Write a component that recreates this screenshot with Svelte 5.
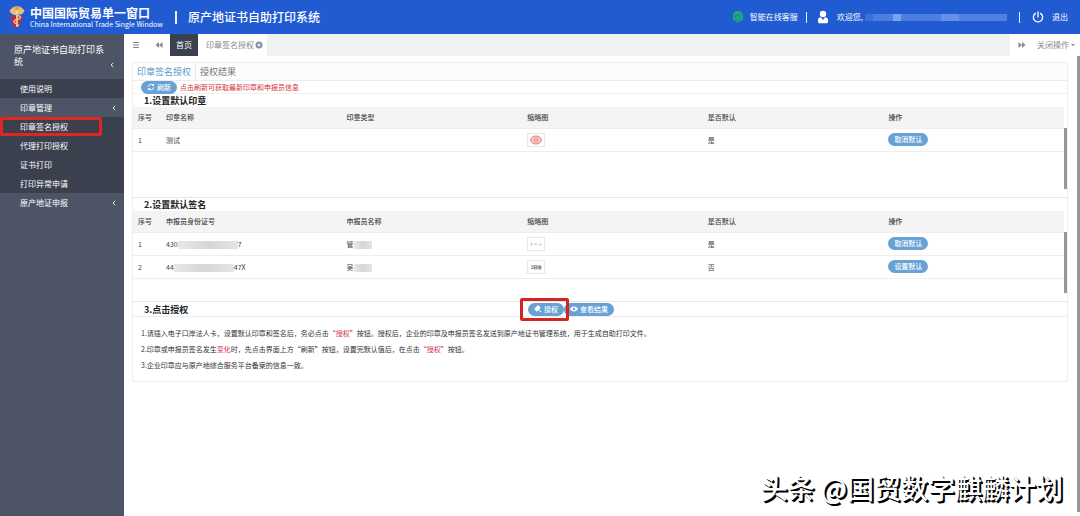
<script lang="ts">
  let activeTab = $state('auth');

  const submenu = ['印章签名授权', '代理打印授权', '证书打印', '打印异常申请'];

  const sealColumns = ['序号', '印章名称', '印章类型', '缩略图', '是否默认', '操作'];
  const signColumns = ['序号', '申报员身份证号', '申报员名称', '缩略图', '是否默认', '操作'];

  const signers = [
    { idStart: '430', idEnd: '7', name: '管', isDefault: true },
    { idStart: '44', idEnd: '47X', name: '吴', isDefault: false },
  ];
</script>

<div class="page">
  <header class="topbar">
    <a class="brand" href="#home">
      <svg class="emblem" viewBox="0 0 18 24" aria-hidden="true">
        <path d="M9 1.200c3 0 5 1.300 7.600 4.600-1.400 2.800-3.200 3.800-5 4L9 8.600 6.400 9.800c-1.800-.2-3.600-1.200-5-4C4 2.500 6 1.200 9 1.200z" fill="#e8c07c" />
        <path d="M3.500 9.500c-2 3-1.500 5.500 1 6.500-1.500 2-.5 5 3 6.500 4-.5 6-3 5-6 2-1.500 2.500-4 2-7l-3 2.500-2.500-2-3 2z" fill="#b32c4b" />
        <path d="M9 3v19" stroke="#f4dfae" stroke-width="1.600" />
        <path d="M6 8c1 2.500 6.500 2 6.500 4.500S6 14 6 16.500s5 2 4.500 4.500" fill="none" stroke="#ecc57a" stroke-width="1.500" />
        <circle cx="9" cy="3.200" r="2.200" fill="#dc9a54" />
      </svg>
      <span class="brand-text">
        <strong>中国国际贸易单一窗口</strong>
        <span>China International Trade Single Window</span>
      </span>
    </a>
    <span class="divider"></span>
    <h1>原产地证书自助打印系统</h1>
    <nav class="user-nav">
      <a class="service" href="#service">
        <svg viewBox="0 0 12 14" aria-hidden="true">
          <path d="M6 1c3 0 5 2 5 5v4l-3 1-2 2-2-2-3-1V6c0-3 2-5 5-5z" fill="#22a77c" />
          <path d="M3.500 5.500h5v4h-5zM6 3v2.500M6 9.500v2" fill="none" stroke="#1b9080" stroke-width="1" />
        </svg>
        智能在线客服
      </a>
      <span class="divider short"></span>
      <span class="welcome">
        <svg viewBox="0 0 12 14" aria-hidden="true">
          <circle cx="6" cy="4" r="3.200" fill="#fff" />
          <path d="M1 12V10c0-1.800 1.200-2.800 3-2.800L6 10l2-2.800c1.800 0 3 1 3 2.800v2c0 .8-.4 1.200-1.200 1.200H2.200C1.400 13.200 1 12.800 1 12z" fill="#fff" />
        </svg>
        欢迎您,
        <span class="redacted"></span>
      </span>
      <span class="divider short"></span>
      <a class="logout" href="#logout">
        <svg viewBox="0 0 14 14" aria-hidden="true">
          <path d="M4 2.800a5.400 5.400 0 1 0 6 0M7 1v6" fill="none" stroke="#fff" stroke-width="1.500" stroke-linecap="round" />
        </svg>
        退出
      </a>
    </nav>
  </header>

  <div class="body">
    <aside class="sidebar">
      <div class="system">
        <span>原产地证书自助打印系统</span>
        {@render chevron()}
      </div>
      <a class="item dark" href="#help">使用说明</a>
      <a class="item" href="#seal">印章管理 {@render chevron()}</a>
      {#each submenu as label, i}
        <a class="item dark" class:marked={i === 0} href="#sub{i}">{label}</a>
      {/each}
      <a class="item" href="#declare">原产地证申报 {@render chevron()}</a>
    </aside>

    <main>
      <div class="tabbar">
        <button class="icon-btn" aria-label="菜单">
          <svg viewBox="0 0 8 8"><path d="M1 1.500h6M1 4h6M1 6.500h6" stroke="#888" stroke-width="1" /></svg>
        </button>
        <button class="icon-btn" aria-label="向左">
          <svg viewBox="0 0 8 8"><path d="M4 1v6L.5 4zM7.500 1v6L4 4z" fill="#888" /></svg>
        </button>
        <button class="page-tab home">首页</button>
        <button class="page-tab">
          印章签名授权
          <svg viewBox="0 0 8 8"><circle cx="4" cy="4" r="3.500" fill="#8391a5" /><path d="M2.700 2.700l2.600 2.600M5.300 2.700L2.700 5.300" stroke="#fff" stroke-width="1" /></svg>
        </button>
        <div class="tab-actions">
          <button class="icon-btn" aria-label="向右">
            <svg viewBox="0 0 8 8"><path d="M.5 1v6L4 4zM4 1v6l3.500-3z" fill="#888" /></svg>
          </button>
          <button class="close-menu">关闭操作 <i></i></button>
        </div>
      </div>

      <div class="content">
        <div class="tabs">
          <button class:active={activeTab === 'auth'} onclick={() => (activeTab = 'auth')}>印章签名授权</button>
          <button class:active={activeTab === 'result'} onclick={() => (activeTab = 'result')}>授权结果</button>
        </div>

        <div class="refresh">
          <button class="pill">
            <svg viewBox="0 0 10 10"><path d="M1.500 4.500A3.600 3.600 0 0 1 8 3M8.500 5.500A3.600 3.600 0 0 1 2 7M8.300 1v2.300H6M1.700 9V6.700H4" fill="none" stroke="#fff" stroke-width="1.200" /></svg>
            刷新
          </button>
          <span>点击刷新可获取最新印章和申报员信息</span>
        </div>

        <section class="grid-section">
          <h2>1.设置默认印章</h2>
          <div class="table-wrap">
            <table>
              {@render head(sealColumns)}
              <tbody>
                <tr>
                  <td>1</td>
                  <td>测试</td>
                  <td></td>
                  <td>
                    <span class="thumb">
                      <svg viewBox="0 0 16 12"><ellipse cx="8" cy="6" rx="5.500" ry="4" fill="#f8cfcf" stroke="#e57f7f" stroke-width="1" /><path d="M4.500 6h7M6 4.200h4M6 7.800h4" stroke="#ea8f8f" stroke-width="1" /></svg>
                    </span>
                  </td>
                  <td>是</td>
                  <td><button class="pill">取消默认</button></td>
                </tr>
              </tbody>
            </table>
            <span class="scrollbar"></span>
          </div>
        </section>

        <section class="grid-section">
          <h2>2.设置默认签名</h2>
          <div class="table-wrap">
            <table>
              {@render head(signColumns)}
              <tbody>
                {#each signers as signer, i}
                  <tr>
                    <td>{i + 1}</td>
                    <td>{signer.idStart}<span class="mask"></span>{signer.idEnd}</td>
                    <td>{signer.name}<span class="mask name"></span></td>
                    <td>
                      <span class="thumb">
                        <svg viewBox="0 0 16 12">
                          {#if i === 0}
                            <path d="M2.500 6h2M3.500 5v2.500M6 6.500l1-1 .5 1.500M8.500 6l1.500 1M11.500 5.500l1.500 1M11.500 7h2" fill="none" stroke="#aaa" stroke-width=".7" />
                          {:else}
                            <path d="M3 5.500l2-1v3.500M3 7.500h2.500M6.500 4.500h2.500v3.500H6.500zM10 5h3v3h-3M6.500 6.300H13M11.500 4.500V8" fill="none" stroke="#777" stroke-width=".8" />
                          {/if}
                        </svg>
                      </span>
                    </td>
                    <td>{signer.isDefault ? '是' : '否'}</td>
                    <td><button class="pill">{signer.isDefault ? '取消默认' : '设置默认'}</button></td>
                  </tr>
                {/each}
              </tbody>
            </table>
            <span class="scrollbar"></span>
          </div>
        </section>

        <section class="authorize">
          <div class="authorize-head">
            <h2>3.点击授权</h2>
            <div class="authorize-actions">
              <span class="highlight">
                <button class="pill">
                  <svg viewBox="0 0 10 10"><path d="M1 5l4-4 2.500 2.500-4 4zM5.500 5.500L9 9" fill="#fff" stroke="#fff" stroke-width="1.300" /></svg>
                  授权
                </button>
              </span>
              <button class="pill">
                <svg viewBox="0 0 10 10"><path d="M0 5c2.500-4 7.500-4 10 0-2.500 4-7.500 4-10 0z" fill="#fff" /><circle cx="5" cy="5" r="1.500" fill="#68a1d4" /></svg>
                查看结果
              </button>
            </div>
          </div>
          <div class="notes">
            <p>1.请插入电子口岸法人卡，设置默认印章和签名后，务必点击<em>“授权”</em>按钮。授权后，企业的印章及申报员签名发送到原产地证书管理系统，用于生成自助打印文件。</p>
            <p>2.印章或申报员签名发生<em>变化</em>时，先点击界面上方“刷新”按钮，设置完默认值后，在点击<em>“授权”</em>按钮。</p>
            <p>3.企业印章应与原产地综合服务平台备案的信息一致。</p>
          </div>
        </section>
      </div>
    </main>
    <span class="page-scroll"></span>
  </div>

  <div class="watermark">头条 @国贸数字麒麟计划</div>
</div>

{#snippet chevron()}
  <svg class="chevron" viewBox="0 0 4 6" aria-hidden="true"><path d="M3.300.8L1 3l2.300 2.200" fill="none" stroke="#e3e5ea" stroke-width="1" /></svg>
{/snippet}

{#snippet head(columns: string[])}
  <thead>
    <tr>
      {#each columns as column}
        <th>{column}</th>
      {/each}
    </tr>
  </thead>
{/snippet}

<style>
  :global(body) {
    margin: 0;
    background: #fff;
  }

  .page {
    position: relative;
    display: flex;
    flex-direction: column;
    min-height: 100vh;
    font-family: 'Noto Sans CJK SC', 'Noto Sans', sans-serif;
    font-size: 7px;
    line-height: 12px;
    color: #444;
  }

  button {
    margin: 0;
    padding: 0;
    border: 0;
    background: none;
    font: inherit;
    color: inherit;
    cursor: pointer;
  }

  a {
    color: inherit;
    text-decoration: none;
  }

  h1,
  h2,
  p {
    margin: 0;
  }

  svg {
    flex: none;
  }

  /* top bar */
  .topbar {
    display: flex;
    align-items: center;
    height: 34px;
    padding: 0 12px 0 8px;
    background: #205bd2;
    color: #fff;
  }

  .brand {
    display: flex;
    align-items: center;
    gap: 4px;
  }

  .emblem {
    width: 18px;
    height: 24px;
  }

  .brand-text {
    display: flex;
    flex-direction: column;
    line-height: 9px;
    white-space: nowrap;
  }

  .brand-text strong {
    font-size: 12px;
    line-height: 14px;
    font-weight: 700;
  }

  .divider {
    width: 2px;
    height: 13px;
    margin: 0 11px 0 12px;
    background: #e6edfb;
  }

  .divider.short {
    width: 1px;
    height: 11px;
    margin: 0;
  }

  h1 {
    font-size: 12px;
    line-height: 18px;
    font-weight: 500;
  }

  .user-nav {
    display: flex;
    align-items: center;
    gap: 8px;
    margin-left: auto;
    font-size: 8px;
  }

  .user-nav a,
  .welcome {
    display: flex;
    align-items: center;
    gap: 6px;
  }

  .user-nav svg {
    width: 12px;
    height: 14px;
  }

  .welcome {
    gap: 8px;
    margin: 0 4px 0 2px;
  }

  .user-nav .logout {
    gap: 8px;
    margin-left: 4px;
  }

  .redacted {
    width: 142px;
    height: 7px;
    margin-left: -6px;
    background: linear-gradient(90deg, #3a6edb 0 8px, #4c7ee1 8px 28px, #7ea3ee 28px 36px, #4c7ee1 36px 76px, #6690e8 76px 94px, #5080e2 94px);
  }

  /* sidebar */
  .body {
    display: flex;
    flex: 1;
  }

  .sidebar {
    flex: none;
    width: 124px;
    background: #4c5466;
    color: #fff;
    font-size: 8px;
  }

  .system {
    display: flex;
    align-items: flex-end;
    justify-content: space-between;
    box-sizing: border-box;
    height: 45px;
    padding: 0 10px 11px 14px;
    font-size: 9px;
  }

  .item {
    display: flex;
    align-items: center;
    justify-content: space-between;
    height: 19px;
    padding: 0 8px 0 20px;
  }

  .dark {
    background: #3a404d;
  }

  .marked {
    margin-right: 22px;
    padding: 0 0 0 17px;
    height: 13px;
    border: 3px solid #e0261f;
    border-radius: 2px;
    box-shadow: 22px 0 #3a404d;
  }

  .chevron {
    width: 4px;
    height: 6px;
  }

  /* page tabs */
  main {
    flex: 1;
    min-width: 0;
  }

  .tabbar {
    display: flex;
    height: 22px;
    background: #f0f2f2;
    font-size: 8px;
    color: #888;
  }

  .icon-btn {
    display: flex;
    align-items: center;
    justify-content: center;
    width: 23px;
    background: #fff;
  }

  .tabbar svg {
    width: 8px;
    height: 8px;
  }

  .page-tab {
    display: flex;
    align-items: center;
    gap: 1px;
    padding: 0 4px 0 8px;
    background: #fff;
    white-space: nowrap;
  }

  .page-tab.home {
    padding: 0 6px;
    background: #3a404d;
    color: #fff;
  }

  .tab-actions {
    display: flex;
    margin-left: auto;
    background: #fff;
  }

  .close-menu {
    display: flex;
    align-items: center;
    gap: 2px;
    padding: 0 2px 0 4px;
    white-space: nowrap;
  }

  .close-menu i {
    border: 2px solid transparent;
    border-top-color: #888;
    border-bottom: 0;
  }

  /* content */
  .content {
    margin: 6px 9px 0 8px;
    border: 1px solid #eef0f0;
    border-bottom: 0;
  }

  .tabs {
    display: flex;
    height: 17px;
    border-bottom: 1px solid #eaeded;
    background: #fcfcfc;
    font-size: 9px;
    color: #777;
  }

  .tabs button {
    padding: 0 4px;
  }

  .tabs .active {
    border-right: 1px solid #e6e9e9;
    background: #fff;
    color: #5b9bc9;
  }

  .refresh {
    display: flex;
    align-items: center;
    gap: 3px;
    height: 12px;
    padding-left: 8px;
    border-bottom: 1px solid #eef0f0;
    color: #d6323a;
  }

  .pill {
    display: inline-flex;
    align-items: center;
    justify-content: center;
    gap: 2px;
    height: 13px;
    padding: 0 6px;
    border-radius: 7px;
    background: #68a1d4;
    color: #fff;
    font-weight: 500;
    line-height: 13px;
    white-space: nowrap;
    vertical-align: middle;
  }

  .pill svg {
    width: 8px;
    height: 8px;
  }

  h2 {
    padding-left: 11px;
    font-size: 9px;
    line-height: 13px;
    font-weight: 700;
    color: #222;
  }

  .grid-section {
    padding-bottom: 8px;
    border-bottom: 1px solid #e6e8e8;
  }

  .table-wrap {
    display: flex;
    height: 82px;
  }

  table {
    width: 100%;
    align-self: flex-start;
    table-layout: fixed;
    border-collapse: collapse;
  }

  th,
  td {
    box-sizing: border-box;
    height: 23px;
    padding: 0 5px;
    border-bottom: 1px solid #eee;
    text-align: left;
    font-weight: 400;
  }

  th {
    height: 21px;
    background: #f4f4f4;
    font-weight: 500;
    color: #444;
  }

  th:first-child {
    width: 28px;
  }

  .thumb {
    display: inline-flex;
    border: 1px solid #e8e8e8;
    vertical-align: middle;
  }

  .thumb svg {
    width: 16px;
    height: 12px;
  }

  .mask {
    display: inline-block;
    width: 60px;
    height: 8px;
    background: linear-gradient(90deg, #e8e8e8, #d6d6d6 50%, #e4e4e4);
    vertical-align: middle;
  }

  .mask.name {
    width: 18px;
  }

  .scrollbar {
    flex: none;
    width: 3px;
    margin-top: 21px;
    background: #969696;
  }

  /* authorisation */
  .authorize {
    border-bottom: 1px solid #eef0f0;
  }

  .authorize-head {
    display: grid;
    grid-template: 14px / 387px 1fr;
    align-items: center;
    border-bottom: 1px solid #eceeee;
  }

  .authorize-actions {
    display: flex;
    align-items: center;
  }

  .highlight {
    z-index: 1;
    display: flex;
    padding: 2px 2px 2px 5px;
    border: 3px solid #d0261f;
    border-radius: 2px;
  }

  .authorize-actions > .pill {
    margin-left: -5px;
  }

  .notes {
    padding: 8px 8px;
    line-height: 16px;
    color: #333;
  }

  .notes em {
    font-style: normal;
    color: #cf3350;
  }

  .page-scroll {
    width: 3px;
    margin: 22px 0 4px;
    background: #969696;
  }

  .watermark {
    position: absolute;
    right: 17px;
    bottom: 8px;
    font-size: 27px;
    line-height: 40px;
    font-weight: 500;
    color: #fff;
    text-shadow: 1px 1px 0 #000, 2px 2px 0 #000;
  }
</style>
